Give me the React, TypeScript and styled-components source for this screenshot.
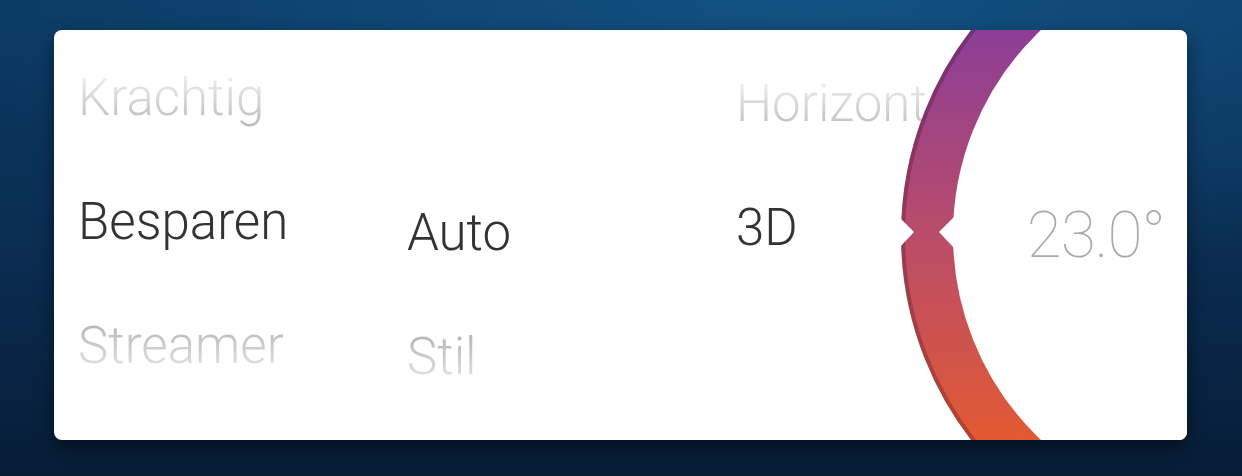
import React from 'react'
import styled, { createGlobalStyle } from 'styled-components'

const GlobalStyle = createGlobalStyle`
  html, body {
    margin: 0;
    padding: 0;
  }
  body {
    width: 1242px;
    height: 476px;
    overflow: hidden;
    font-family: Roboto, 'Liberation Sans', sans-serif;
    background:
      radial-gradient(ellipse 70% 60% at 65% 0%, rgba(20, 88, 138, 0.8), rgba(20, 88, 138, 0) 100%),
      linear-gradient(180deg, #0b3a64 0%, #0a2c50 55%, #071c37 100%);
  }
`

const Page = styled.div`
  box-sizing: border-box;
  width: 1242px;
  height: 476px;
  padding: 30px 55px 36px 54px;
`

const Card = styled.div`
  position: relative;
  display: flex;
  height: 410px;
  background: #fff;
  border-radius: 8px;
  overflow: hidden;
  box-shadow: 0 8px 18px rgba(0, 0, 0, 0.45);
  padding-left: 24px;
`

const Column = styled.div<{ $offset: number }>`
  display: flex;
  flex-direction: column;
  width: 329px;
  padding-top: ${(p) => p.$offset}px;
`

const Item = styled.div<{ $state: 'above' | 'selected' | 'below' | 'empty' }>`
  height: 124px;
  line-height: 124px;
  font-size: 51px;
  font-weight: 300;
  white-space: nowrap;
  color: #333;
  ${(p) =>
    p.$state === 'above' &&
    `
    background: linear-gradient(180deg, #ebebeb 35%, #bdbdbd 70%);
    -webkit-background-clip: text;
    background-clip: text;
    color: transparent;
  `}
  ${(p) =>
    p.$state === 'below' &&
    `
    background: linear-gradient(180deg, #b9b9b9 35%, #e4e4e4 70%);
    -webkit-background-clip: text;
    background-clip: text;
    color: transparent;
  `}
`

const Dial = styled.div`
  position: absolute;
  top: 0;
  right: 0;
  width: 300px;
  height: 410px;
  display: flex;
  align-items: center;
  justify-content: flex-end;
  padding-right: 22px;
  box-sizing: border-box;
`

const Ring = styled.svg`
  position: absolute;
  inset: 0;
`

const Temp = styled.span`
  position: relative;
  font-size: 64px;
  font-weight: 100;
  color: #a9a9a9;
  letter-spacing: -1px;
`

const columns = [
  { offset: 6, items: [['Krachtig', 'above'], ['Besparen', 'selected'], ['Streamer', 'below']] },
  { offset: 17, items: [['', 'empty'], ['Auto', 'selected'], ['Stil', 'below']] },
  { offset: 12, items: [['Horizontaal', 'above'], ['3D', 'selected'], ['', 'empty']] },
] as const

const DialRing = () => (
  <Ring width="300" height="410" viewBox="0 0 300 410">
    <defs>
      <linearGradient id="ringGrad" x1="0" y1="0" x2="0" y2="410" gradientUnits="userSpaceOnUse">
        <stop offset="0" stopColor="#8c3e97" />
        <stop offset="0.5" stopColor="#b94c6a" />
        <stop offset="1" stopColor="#e25a33" />
      </linearGradient>
    </defs>
    <circle cx="349" cy="205" r="309" fill="#fff" stroke="url(#ringGrad)" strokeWidth="52" />
    <circle cx="349" cy="205" r="333" fill="none" stroke="rgba(60,10,40,0.28)" strokeWidth="4" />
    <polygon points="0,187 12,187 27,202 12,218 0,218" fill="#fff" />
    <polygon points="80,187 67,187 52,202 67,218 80,218" fill="#fff" />
  </Ring>
)

const App = () => {
  return (
    <>
      <GlobalStyle />
      <Page>
        <Card>
          {columns.map((col, i) => (
            <Column key={i} $offset={col.offset}>
              {col.items.map(([label, state], j) => (
                <Item key={j} $state={state}>
                  {label}
                </Item>
              ))}
            </Column>
          ))}
          <Dial>
            <DialRing />
            <Temp>23.0°</Temp>
          </Dial>
        </Card>
      </Page>
    </>
  )
}

export default App
